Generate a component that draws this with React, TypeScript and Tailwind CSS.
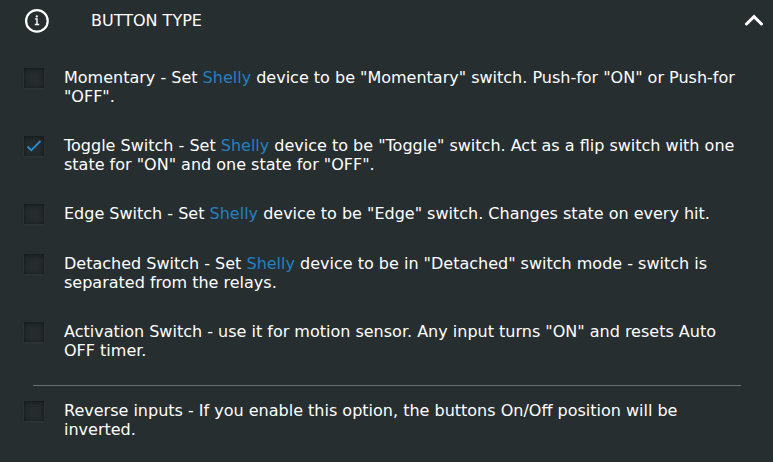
import { ReactNode } from "react";

const Shelly = () => <span className="text-[#2380c3]">Shelly</span>;

const Checkbox = ({ checked }: { checked?: boolean }) => (
  <div className="flex h-5 w-5 shrink-0 items-center justify-center bg-[#262c2e] shadow-[inset_0_1px_5px_#121617,0_1px_2px_#32383a]">
    {checked && (
      <svg width="16" height="16" viewBox="0 0 16 16" fill="none" stroke="#2b8fd8" strokeWidth="1.8">
        <path d="M1.5 8.5 5.3 12.3 14.5 3" />
      </svg>
    )}
  </div>
);

const Option = ({ checked, children }: { checked?: boolean; children: ReactNode }) => (
  <div className="flex gap-5 pl-6">
    <Checkbox checked={checked} />
    <p className="whitespace-nowrap">{children}</p>
  </div>
);

export default function App() {
  return (
    <div className="h-[462px] w-full overflow-hidden bg-[#272e30] font-['DejaVu_Sans',sans-serif] text-[16px] leading-[19px] text-white">
      <div className="flex h-10 items-center pl-6 pr-[9px]">
        <svg width="25" height="25" viewBox="0 0 25 25" fill="none" stroke="white">
          <circle cx="12.9" cy="12.9" r="10.8" strokeWidth="2.2" />
          <path d="M11 10.9h2v5.6M10.8 16.5h4.4" strokeWidth="1.4" />
          <circle cx="12.8" cy="8.4" r="1.1" fill="white" stroke="none" />
        </svg>
        <h1 className="ml-[42px] flex-1">BUTTON TYPE</h1>
        <svg width="20" height="12" viewBox="0 0 20 12" fill="none" stroke="white" strokeWidth="3" strokeLinecap="round">
          <path d="M2.5 10 10 2.6 17.5 10" />
        </svg>
      </div>
      <div className="flex flex-col gap-[30px] pt-7">
        <Option>
          Momentary - Set <Shelly /> device to be "Momentary" switch. Push-for "ON" or Push-for
          <br />
          "OFF".
        </Option>
        <Option checked>
          Toggle Switch - Set <Shelly /> device to be "Toggle" switch. Act as a flip switch with one
          <br />
          state for "ON" and one state for "OFF".
        </Option>
        <Option>
          Edge Switch - Set <Shelly /> device to be "Edge" switch. Changes state on every hit.
        </Option>
        <Option>
          Detached Switch - Set <Shelly /> device to be in "Detached" switch mode - switch is
          <br />
          separated from the relays.
        </Option>
        <Option>
          Activation Switch - use it for motion sensor. Any input turns "ON" and resets Auto
          <br />
          OFF timer.
        </Option>
      </div>
      <div className="ml-[33px] mr-8 mt-[25px] mb-[15px] h-px bg-[#6b6e71]" />
      <Option>
        Reverse inputs - If you enable this option, the buttons On/Off position will be
        <br />
        inverted.
      </Option>
    </div>
  );
}
